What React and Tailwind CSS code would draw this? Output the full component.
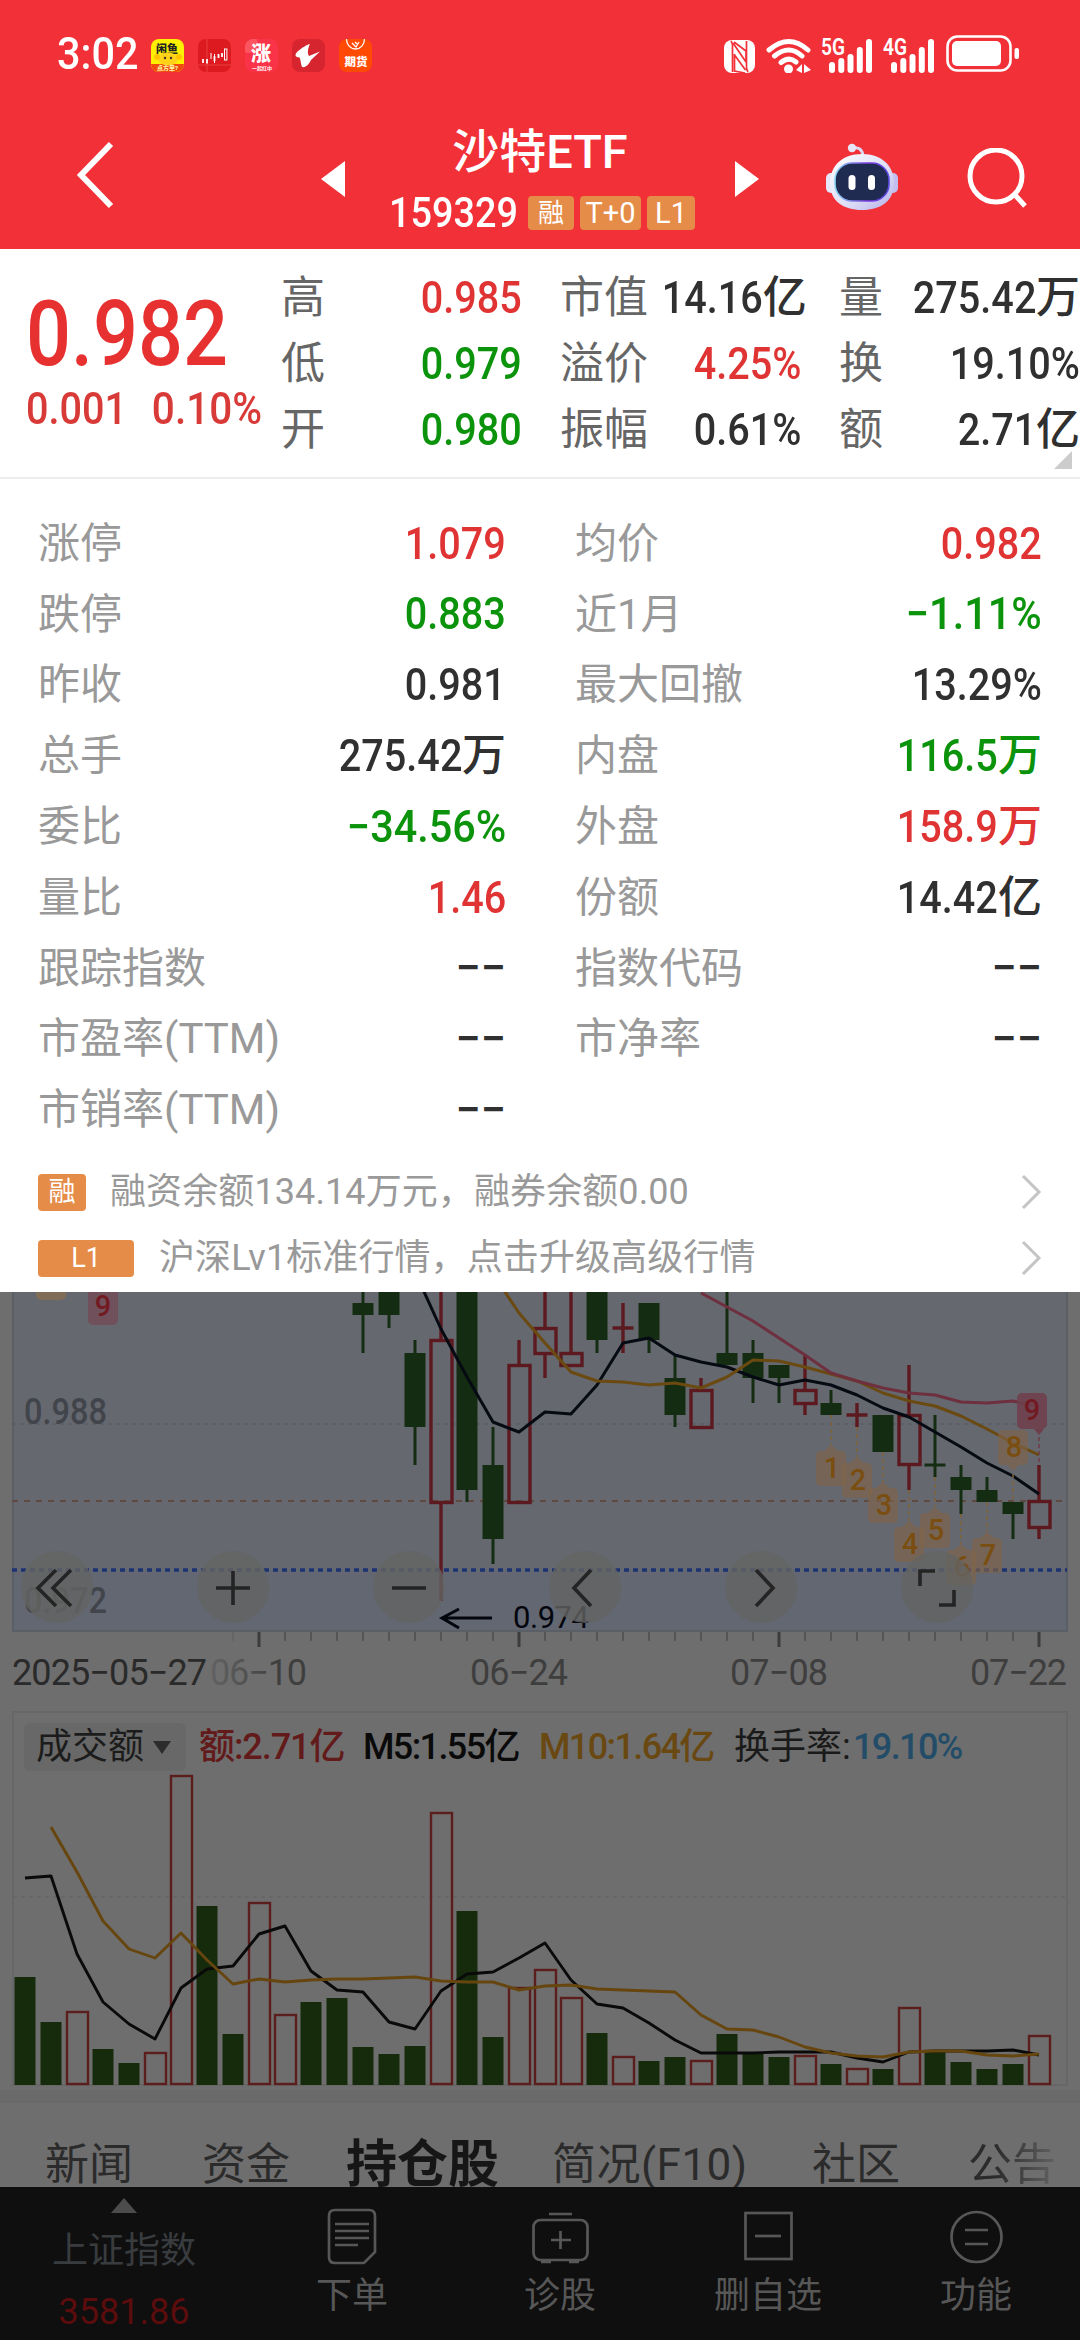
import React from "react";

const summary = [
  [["高", "0.985", "red"], ["低", "0.979", "green"], ["开", "0.980", "green"]],
  [["市值", "14.16亿"], ["溢价", "4.25%", "red"], ["振幅", "0.61%"]],
  [["量", "275.42万"], ["换", "19.10%"], ["额", "2.71亿"]],
];

const details = [
  ["涨停", "1.079", "red", "均价", "0.982", "red"],
  ["跌停", "0.883", "green", "近1月", "−1.11%", "green"],
  ["昨收", "0.981", "", "最大回撤", "13.29%", ""],
  ["总手", "275.42万", "", "内盘", "116.5万", "green"],
  ["委比", "−34.56%", "green", "外盘", "158.9万", "red"],
  ["量比", "1.46", "red", "份额", "14.42亿", ""],
  ["跟踪指数", "−−", "", "指数代码", "−−", ""],
  ["市盈率(TTM)", "−−", "", "市净率", "−−", ""],
  ["市销率(TTM)", "−−", "", "", "", ""],
];

const toneClass = (tone) => {
  if (tone === "red") return "text-[#df3433]";
  if (tone === "green") return "text-[#0b930b]";
  return "text-[#303030]";
};

// day index -> x of the candle centre
const px = (i) => 25 + i * 26;

// [index, up, high, low, bodyTop, bodyBottom]
const candles = [
  [13, 0, -10, 61, 11, 23],
  [14, 0, -10, 36, -10, 23],
  [15, 0, 48, 173, 61, 135],
  [16, 1, -10, 309, 48, 210],
  [17, 0, -10, 210, -10, 198],
  [18, 0, 135, 272, 173, 247],
  [19, 1, 48, 210, 73, 210],
  [20, 1, -10, 86, 36, 61],
  [21, 1, -10, 73, 61, 73],
  [22, 0, -10, 61, -10, 48],
  [23, 1, 11, 61, 36, 36],
  [24, 0, 11, 61, 11, 48],
  [25, 0, 64, 135, 86, 123],
  [26, 1, 86, 135, 98, 135],
  [27, 0, -10, 73, 61, 73],
  [28, 0, 48, 111, 61, 86],
  [29, 0, 73, 111, 73, 86],
  [30, 1, 62, 123, 98, 111],
  [31, 0, 98, 123, 111, 123],
  [32, 1, 111, 135, 123, 123],
  [33, 0, 123, 160, 123, 160],
  [34, 1, 73, 198, 123, 172],
  [35, 0, 123, 185, 173, 173],
  [36, 0, 173, 222, 185, 198],
  [37, 0, 185, 210, 198, 210],
  [38, 0, 210, 247, 210, 222],
  [39, 1, 173, 247, 209, 235],
];

const ma5 = [-20, 37, 85, 130, 140, 120, 122, 93, 51, 46, 63, 70, 75, 85, 93, 88, 93, 103, 116, 125, 140, 155, 171, 184, 202];
const ma10 = [-18, 21, 51, 80, 89, 90, 93, 91, 96, 85, 68, 69, 75, 82, 89, 101, 109, 114, 124, 137, 151, 163];
const ma20 = [1, 15, 29, 46, 63, 81, 89, 96, 101, 103, 110, 111, 109, 115];

// [number, index, boxTop, dotted line start]
const marks = [
  [1, 31, 159, 123],
  [2, 32, 171, 135],
  [3, 33, 196, 160],
  [4, 34, 235, 198],
  [5, 35, 221, 185],
  [6, 36, 258, 222],
  [7, 37, 246, 210],
];

// [height, up]
const volumes = [
  [108, 0], [63, 0], [73, 1], [36, 0], [22, 0], [32, 1], [309, 1], [179, 0], [51, 0], [182, 1],
  [70, 1], [83, 0], [87, 0], [38, 0], [31, 0], [39, 0], [272, 1], [174, 0], [48, 0], [97, 1],
  [115, 1], [87, 1], [52, 0], [28, 1], [24, 0], [28, 0], [24, 1], [51, 0], [31, 0], [28, 0],
  [29, 1], [21, 0], [16, 1], [16, 0], [77, 1], [33, 0], [23, 0], [16, 0], [21, 0], [49, 1],
];
const volMa5 = [207, 209, 131, 83, 61, 46, 97, 116, 119, 151, 159, 114, 95, 93, 63, 56, 94, 111, 113, 127, 142, 105, 81, 77, 62, 45, 32, 32, 32, 33, 33, 33, 27, 23, 33, 34, 34, 34, 35, 30];
const volMa10 = [258, 213, 164, 136, 127, 152, 125, 101, 106, 103, 105, 106, 106, 107, 108, 104, 103, 103, 95, 99, 100, 96, 95, 94, 93, 70, 56, 55, 48, 38, 32, 29, 28, 33, 34, 34, 30, 29, 31];

const toPoints = (ys, from) => ys.map((y, i) => `${px(from + i)},${y}`).join(" ");
const volPoints = (hs, from) => hs.map((h, i) => `${px(from + i)},${374 - h}`).join(" ");

// narrow digits, with the 万 / 亿 unit kept at its full width
const Value = ({ value, tone }) => {
  const [, digits, unit] = value.match(/^([^万亿]*)([万亿]?)$/);
  let scale = "scale-x-[0.88]";
  if (digits.startsWith("−")) scale = "scale-x-[0.92]";
  if (digits === "−−") scale = "";
  return (
    <span className={`text-[45px] font-medium whitespace-nowrap ${toneClass(tone)}`}>
      <span className={`inline-block origin-right ${scale}`}>{digits}</span>
      {unit && <span className="text-[44px]">{unit}</span>}
    </span>
  );
};

const AppBadge = ({ className, children }) => (
  <svg viewBox="0 0 33 33" className={`w-[33px] h-[33px] rounded-[8px] ${className}`}>
    {children}
  </svg>
);

const Signal = ({ label }) => (
  <svg viewBox="0 0 52 36" className="w-[52px] h-9 overflow-visible" fill="#fff">
    <text x="-1" y="18" fontSize="23" fontWeight="600" textLength="24" lengthAdjust="spacingAndGlyphs">
      {label}
    </text>
    <rect x="7" y="25" width="6" height="11" rx="3" />
    <rect x="16.3" y="21" width="6" height="15" rx="3" />
    <rect x="25.5" y="17" width="6" height="19" rx="3" />
    <rect x="34.8" y="10" width="6" height="26" rx="3" />
    <rect x="44" y="2" width="6" height="34" rx="3" />
  </svg>
);

const StatusBar = () => (
  <div className="h-[108px] pl-[57px] pt-[35px] pr-[60px] flex items-start justify-between text-white">
    <div className="flex items-center h-[40px]">
      <span className="w-[94px]">
        <span className="inline-block origin-left scale-x-[0.92] text-[45px] leading-[40px] font-medium">3:02</span>
      </span>
      <div className="flex gap-[14px]">
        <AppBadge className="bg-[#fdf000]">
          <rect y="25" width="33" height="8" fill="#f04a10" />
          <text x="5" y="14" fontSize="11" fontWeight="900" fill="#222">闲鱼</text>
          <ellipse cx="17" cy="20" rx="10" ry="6.5" fill="#ffd21a" />
          <circle cx="6" cy="18" r="3" fill="#ffc400" />
          <circle cx="28" cy="18" r="3" fill="#ffc400" />
          <circle cx="14" cy="19" r="1.2" fill="#432" />
          <circle cx="20" cy="19" r="1.2" fill="#432" />
          <text x="6" y="31" fontSize="6" fontWeight="900" fill="#fff3a0">点方单?</text>
        </AppBadge>
        <AppBadge className="bg-[#dc1a20]">
          <path d="M9 0V33M0 26H33" stroke="#ee4a4a" strokeWidth="0.8" />
          <path d="M5 20V24M9 20V24.500M16.500 17V22M20.500 15V19M24 14V18" stroke="#fff" strokeWidth="1.800" />
          <path d="M13 14V20M16.500 15V24" stroke="#fff" strokeWidth="1" />
          <rect x="26.500" y="10" width="2.400" height="11" fill="none" stroke="#fff" strokeWidth="1" />
        </AppBadge>
        <AppBadge className="bg-[#fb3348]">
          <circle cx="4" cy="5" r="9" fill="#ff6a72" opacity="0.6" />
          <text x="6" y="22" fontSize="20" fontWeight="900" fill="#fff">涨</text>
          <text x="7" y="31" fontSize="5" fontWeight="700" fill="#fff">一起红中</text>
        </AppBadge>
        <AppBadge className="bg-[#d6252f]">
          <path d="M15 6C8 10 4 13 3.500 16C3.500 18 5 18 7.500 18.500C9 21 8.500 25 10 28C14 29 17 25 19 21L28 12.500L17 17C15 14 16 9 18 5Z" fill="#fff" />
        </AppBadge>
        <AppBadge className="bg-[#ff4a05]">
          <path d="M7.500 0A9 10 0 0 0 25.500 0" fill="none" stroke="#fff" strokeWidth="1.300" />
          <path d="M13 4L17 8L20 3M16 3L18 5" fill="none" stroke="#fff" strokeWidth="1.300" />
          <text x="5.500" y="27" fontSize="11.500" fontWeight="900" fill="#fff">期货</text>
        </AppBadge>
      </div>
    </div>
    <div className="flex items-end">
      <svg viewBox="0 0 31 33" className="w-[31px] h-[33px] mt-1">
        <rect width="31" height="33" rx="8" fill="#fff" />
        <path d="M7 1Q8.500 3 8.500 6V32M9 3L22 22M10.500 14V31L21 33M24 32Q22.500 30 22.500 27V1M21.500 30L10.500 15M22 20V11L10 2" fill="none" stroke="#f13038" strokeWidth="1.700" />
      </svg>
      <svg viewBox="0 0 46 36" className="ml-[11px] w-[46px] h-9" fill="none" stroke="#fff" strokeWidth="5" strokeLinecap="round">
        <path d="M3 13Q23 -4 42 13M8.500 19Q23 7 36 19M15 25.500Q23 19 30 25" />
        <circle cx="22.500" cy="32" r="4.500" fill="#fff" stroke="none" />
        <path d="M36 27V36L30 33ZM38 27L45 33L38 36Z" fill="#fff" stroke="none" />
      </svg>
      <div className="ml-[10px] flex gap-[10px]">
        <Signal label="5G" />
        <Signal label="4G" />
      </div>
      <svg viewBox="0 0 74 38" className="ml-[10px] w-[74px] h-[38px]">
        <rect x="1.500" y="1.500" width="63" height="34" rx="10" fill="none" stroke="#fff" strokeWidth="2.600" />
        <rect x="6" y="6" width="49" height="25" rx="5" fill="#fff" />
        <rect x="68.500" y="13" width="4.500" height="11" rx="2" fill="#fff" />
      </svg>
    </div>
  </div>
);

const Robot = () => (
  <svg viewBox="0 0 73 68" className="ml-[66px] mb-1 w-[73px] h-[68px]">
    <defs>
      <linearGradient id="shell" x1="0" y1="0" x2="1" y2="1">
        <stop offset="0" stopColor="#fff" />
        <stop offset="0.6" stopColor="#dcdcf6" />
        <stop offset="1" stopColor="#b4b0ea" />
      </linearGradient>
      <linearGradient id="rim" x1="0" y1="0" x2="1" y2="0">
        <stop offset="0" stopColor="#8ad6f4" />
        <stop offset="0.6" stopColor="#7a3ce0" />
        <stop offset="1" stopColor="#5a4be0" />
      </linearGradient>
    </defs>
    <path d="M27 5Q37 3 38 13" fill="none" stroke="#dcd8f2" strokeWidth="3" />
    <circle cx="27" cy="5" r="4.200" fill="#e6e4f6" />
    <rect x="1" y="30" width="10" height="20" rx="5" fill="#e6e6fa" />
    <rect x="63" y="30" width="10" height="20" rx="5" fill="#c2bff0" />
    <path d="M37 11C58 11 69 24 69 40C69 58 56 67 37 67C18 67 5 58 5 40C5 24 16 11 37 11Z" fill="url(#shell)" />
    <rect x="10" y="20" width="54" height="38" rx="17" fill="#1f2b50" stroke="url(#rim)" strokeWidth="1.600" />
    <rect x="23.500" y="32" width="7" height="15" rx="3.500" fill="#fff" />
    <rect x="43" y="32" width="7" height="15" rx="3.500" fill="#fff" />
  </svg>
);

const TitleBar = () => (
  <div className="h-[141px] flex items-center text-white">
    <div className="w-[321px] pl-[76px]">
      <svg viewBox="0 0 38 68" className="w-[38px] h-[68px] -mt-2" fill="none" stroke="#fff" strokeWidth="6">
        <path d="M35 3L5 34L35 65" />
      </svg>
    </div>
    <svg viewBox="0 0 24 36" className="w-6 h-9" fill="#fff">
      <path d="M24 0V36L0 18Z" />
    </svg>
    <div className="w-[390px] pt-[4px] flex flex-col items-center">
      <div className="text-[47px] leading-[56px] font-medium">沙特ETF</div>
      <div className="mt-[8px] pl-[4px] flex items-center gap-[6px]">
        <span className="w-[133px]">
          <span className="inline-block origin-left scale-x-[0.9] text-[42px] leading-[50px] font-medium">159329</span>
        </span>
        <span className="w-[46px] h-[34px] rounded-[4px] bg-[#e58c49] text-[26px] leading-[34px] text-center">融</span>
        <span className="w-[61px] h-[34px] rounded-[4px] bg-[#e58c49] text-[29px] leading-[34px] text-center">T+0</span>
        <span className="w-[48px] h-[34px] rounded-[4px] bg-[#e58c49] text-[29px] leading-[34px] text-center">L1</span>
      </div>
    </div>
    <svg viewBox="0 0 24 36" className="w-6 h-9" fill="#fff">
      <path d="M0 0V36L24 18Z" />
    </svg>
    <Robot />
    <svg viewBox="0 0 62 62" className="ml-[69px] w-[62px] h-[62px]" fill="none" stroke="#fff" strokeWidth="5">
      <circle cx="29" cy="28" r="26" />
      <path d="M48 47L58 58" />
    </svg>
  </div>
);

const QuoteSummary = () => (
  <div className="relative h-[230px] border-b-2 border-[#ececec] flex">
    <div className="w-[281px] shrink-0 pl-[26px] pt-[39px] text-[#e63130]">
      <div className="h-[94px]">
        <span className="inline-block origin-left scale-x-[0.87] text-[91px] leading-[92px] font-medium">0.982</span>
      </div>
      <div className="mt-[4px] w-[236px] flex justify-between text-[45px] leading-[46px] font-medium text-[#d83a38]">
        <span className="w-[112px] origin-left scale-x-[0.88]">0.001</span>
        <span className="w-[124px] flex justify-end origin-right scale-x-[0.9]">0.10%</span>
      </div>
    </div>
    <div className="pt-[16px] flex shrink-0 gap-[38px]">
      {summary.map((col, i) => (
        <div key={i} className="w-[241px]">
          {col.map(([label, value, tone]) => (
            <div key={label} className="h-[66px] flex items-center justify-between whitespace-nowrap">
              <span className="text-[44px] text-[#666]">{label}</span>
              <Value value={value} tone={tone} />
            </div>
          ))}
        </div>
      ))}
    </div>
    <svg viewBox="0 0 18 18" className="absolute right-2 bottom-2 w-[18px] h-[18px]" fill="#ccc">
      <path d="M18 0V18H0Z" />
    </svg>
  </div>
);

const DetailSheet = () => (
  <div className="h-[813px] pt-[29px] pl-[38px] pr-[38px]">
    {details.map((row) => (
      <div key={row[0]} className="h-[70.8px] grid grid-cols-[468px_467px] gap-x-[69px] items-center">
        <div className="flex items-center justify-between">
          <span className="text-[42px] text-[#999]">{row[0]}</span>
          <Value value={row[1]} tone={row[2]} />
        </div>
        <div className="flex items-center justify-between">
          <span className="text-[42px] text-[#999]">{row[3]}</span>
          <Value value={row[4]} tone={row[5]} />
        </div>
      </div>
    ))}
    <div className="mt-[14px]">
      <Notice tag="融" tagClass="w-[48px]" gap="ml-[24px]" text="融资余额134.14万元，融券余额0.00" />
      <Notice tag="L1" tagClass="w-[96px]" gap="ml-[25px]" text="沪深Lv1标准行情，点击升级高级行情" />
    </div>
  </div>
);

const Notice = ({ tag, tagClass, gap, text }) => (
  <div className="h-[66px] flex items-center">
    <span className={`h-[37px] rounded-[4px] bg-[#e58c49] text-white text-[27px] leading-[37px] text-center ${tagClass}`}>{tag}</span>
    <span className={`text-[36px] tracking-[0.1px] text-[#999] ${gap}`}>{text}</span>
    <svg viewBox="0 0 22 36" className="ml-auto w-[22px] h-9" fill="none" stroke="#c4c4c4" strokeWidth="3">
      <path d="M3 2L19 18L3 34" />
    </svg>
  </div>
);

const Mark = ({ n, x, top, down }) => (
  <g>
    <path
      d={
        down
          ? `M${x - 10} ${top}h20q5 0 5 5v25q0 5 -5 5h-4l-6 6l-6 -6h-4q-5 0 -5 -5v-25q0 -5 5 -5z`
          : `M${x - 10} ${top}h3l7 -6l7 6h3q5 0 5 5v25q0 5 -5 5h-20q-5 0 -5 -5v-25q0 -5 5 -5z`
      }
      fill="#806448"
      fillOpacity="0.65"
    />
    <text x={x + 1} y={top + 27} textAnchor="middle" fontSize="29" fontWeight="500" fill="#7a4e10">
      {n}
    </text>
  </g>
);

const KLineChart = () => (
  <svg viewBox="0 0 1080 419" className="block w-[1080px] h-[419px]">
    <rect x="12" y="0" width="1056" height="339" fill="#65686f" />
    <rect x="12" y="278" width="1056" height="61" fill="#626772" />
    <path d="M13 0V339H1067V0" fill="none" stroke="#5a5f66" strokeWidth="2" />
    <path d="M12 132H1067" stroke="#575a60" strokeWidth="1" strokeDasharray="4 4" />
    <path d="M12 209H1067" stroke="#5e4a40" strokeWidth="2" strokeDasharray="6 6" />
    <path d="M12 278H1067" stroke="#1c3272" strokeWidth="3.500" strokeDasharray="5 4" />
    <g fontSize="37" fontWeight="500" fill="#41454b">
      <text x="24" y="132" textLength="83" lengthAdjust="spacingAndGlyphs">0.988</text>
      <text x="24" y="321" textLength="83" lengthAdjust="spacingAndGlyphs">0.972</text>
    </g>

    <rect x="36" y="-15" width="30" height="23" rx="5" fill="#7f6d58" />
    <rect x="88" y="-3" width="30" height="36" rx="5" fill="#70505a" />
    <text x="103" y="24" textAnchor="middle" fontSize="29" fontWeight="500" fill="#721a22">9</text>

    {candles.map(([i, up, high, low, top, bottom]) => {
      const x = px(i);
      const color = up ? "#5c1a20" : "#142c12";
      const w = up ? 3.4 : 3;
      if (top === bottom) {
        return <path key={i} d={`M${x} ${high}V${low}M${x - 10.5} ${top}h21`} stroke={color} strokeWidth={w} />;
      }
      return (
        <g key={i}>
          <path d={`M${x} ${high}V${top}M${x} ${bottom}V${low}`} stroke={color} strokeWidth={w} />
          {up ? (
            <rect x={x - 10} y={top + 0.5} width="21" height={bottom - top} fill="none" stroke={color} strokeWidth="3.4" />
          ) : (
            <rect x={x - 10.5} y={top} width="21" height={bottom - top} fill={color} />
          )}
        </g>
      );
    })}

    <g fill="none" strokeWidth="3" strokeLinejoin="round">
      <polyline points={toPoints(ma5, 15)} stroke="#060a12" />
      <polyline points={toPoints(ma10, 18)} stroke="#6a4a10" />
      <polyline points={toPoints(ma20, 26)} stroke="#6e303f" />
    </g>

    {marks.map(([n, i, top, from]) => (
      <g key={n}>
        <path d={`M${px(i)} ${from}V${top - 6}`} stroke="#80623a" strokeWidth="1.5" strokeDasharray="4 3" />
        <Mark n={n} x={px(i)} top={top} />
      </g>
    ))}
    <path d={`M${px(38)} 182V210`} stroke="#80623a" strokeWidth="1.5" strokeDasharray="4 3" />
    <path d={`M${px(39)} 145V173`} stroke="#6e3a45" strokeWidth="1.5" strokeDasharray="4 3" />
    <Mark n={8} x={px(38)} top={138} down />
    <g>
      <rect x="1017" y="101" width="30" height="36" rx="5" fill="#6e404c" fillOpacity="0.9" />
      <path d="M1034 137h10l-5 6z" fill="#6e404c" />
      <text x="1032" y="128" textAnchor="middle" fontSize="29" fontWeight="500" fill="#721a22">9</text>
    </g>

    <path d="M492 326H442M459 317L442 326L459 336" fill="none" stroke="#04060e" strokeWidth="3" />
    <text x="513" y="336" fontSize="31" fill="#04060e" textLength="76">0.974</text>

    {Array.from({ length: 32 }, (_, k) => k + 8).map((i) => (
      <path
        key={i}
        d={`M${px(i)} 340V${i % 10 === 9 ? 355 : 349}`}
        stroke={i === 8 ? "#5c5c5c" : "#3c3c3c"}
        strokeWidth={i % 10 === 9 ? 3 : 1}
      />
    ))}

    <defs>
      <linearGradient id="dateFade" x1="0" y1="0" x2="1" y2="0">
        <stop offset="0" stopColor="#626262" />
        <stop offset="0.4" stopColor="#505050" />
        <stop offset="0.7" stopColor="#3e3e3e" />
      </linearGradient>
    </defs>
    <g fontSize="36" fill="#3e3e3e">
      <text x="12" y="393" fill="#2a2a2a" textLength="195">2025−05−27</text>
      <text x="210" y="393" fill="url(#dateFade)" textLength="97">06−10</text>
      <text x="470" y="393" textLength="98">06−24</text>
      <text x="730" y="393" textLength="98">07−08</text>
      <text x="970" y="393" textLength="97">07−22</text>
    </g>
  </svg>
);

const chartButtons = [
  "M35 19L17 37L35 55M50 19L32 37L50 55",
  "M36 20V54M19 37H53",
  "M19 37H53",
  "M42 19L25 37L42 55",
  "M31 19L48 37L31 55",
  "M19 35V20H34M38 54H53V39",
];

const ChartControls = () => (
  <div className="absolute left-[21px] top-[259px] flex gap-[104px]">
    {chartButtons.map((d) => (
      <button key={d} className="w-[72px] h-[72px] rounded-full bg-[#646463]/80">
        <svg viewBox="0 0 72 72" className="w-[72px] h-[72px]" fill="none" stroke="#242424" strokeWidth="3.6">
          <path d={d} />
        </svg>
      </button>
    ))}
  </div>
);

const VolumePanel = () => (
  <div className="mx-3 h-[375px] border-2 border-[#676767] relative">
    <div className="absolute left-[10px] top-[10px] h-[48px] flex items-center text-[36px] font-medium whitespace-nowrap">
      <div className="w-[162px] h-[48px] rounded-[6px] bg-[#686868] flex items-center pl-[12px] text-[#1c1c1c]">
        <span className="font-normal">成交额</span>
        <svg viewBox="0 0 18 13" className="ml-[9px] w-[18px] h-[13px]" fill="#2c2c2c">
          <path d="M0 0H18L9 13Z" />
        </svg>
      </div>
      <span className="ml-[13px] w-[164px] text-[#631a1b] tracking-[-0.03em]">额:2.71亿</span>
      <span className="w-[176px] text-[#0a0a0a] tracking-[-0.045em]">M5:1.55亿</span>
      <span className="w-[195px] text-[#694812] tracking-[-0.045em]">M10:1.64亿</span>
      <span className="w-[119px] font-normal text-[#1a1a1a]">换手率:</span>
      <span className="text-[#234c68] tracking-[-0.045em]">19.10%</span>
    </div>
    <svg viewBox="12 0 1056 375" className="-m-[2px] block w-[1056px] h-[375px] max-w-none">
      <path d="M13 186H1067" stroke="#606060" strokeWidth="1" strokeDasharray="4 4" />
      {volumes.map(([h, up], i) =>
        up ? (
          <rect key={i} x={px(i) - 10} y={374 - h} width="21" height={h - 1} fill="none" stroke="#5c1d1d" strokeWidth="2.4" />
        ) : (
          <rect key={i} x={px(i) - 10.5} y={374 - h} width="21" height={h} fill="#152b0c" />
        )
      )}
      <g fill="none" strokeWidth="2.9" strokeLinejoin="round">
        <polyline points={volPoints(volMa5, 0)} stroke="#0a0a0a" />
        <polyline points={volPoints(volMa10, 1)} stroke="#66460e" />
      </g>
    </svg>
  </div>
);

const NewsTabs = () => (
  <div className="h-[84px] overflow-hidden flex text-[44px] leading-[60px] pt-[32px] pl-[45px] text-[#2b2b2b] whitespace-nowrap">
    <span className="w-[157px]">新闻</span>
    <span className="w-[144px]">资金</span>
    <span className="w-[206px] text-[51px] font-bold text-[#161616]">持仓股</span>
    <span className="w-[260px] tracking-[0.5px]">简况(F10)</span>
    <span className="w-[156px]">社区</span>
    <span className="bg-gradient-to-r from-[#2b2b2b] from-30% to-[#626262] bg-clip-text text-transparent">公告</span>
  </div>
);

const BottomBar = () => (
  <div className="h-[153px] bg-[#0f0f0f] flex text-[36px] leading-[44px] text-[#575757]">
    <div className="w-[248px] flex flex-col items-center pt-[11px]">
      <svg viewBox="0 0 26 15" className="w-[26px] h-[15px]" fill="#4c4c4c">
        <path d="M0 15L13 0L26 15Z" />
      </svg>
      <span className="mt-[16px] text-[#393c3f]">上证指数</span>
      <span className="mt-[17px] text-[#5c0c0c]">3581.86</span>
    </div>
    <BarItem label="下单">
      <path d="M10 3H44Q50 3 50 9V45L39 56H10Q4 56 4 50V9Q4 3 10 3Z" />
      <path d="M10 17H44M10 24H44M10 31H44M10 38H33" />
    </BarItem>
    <BarItem label="诊股">
      <rect x="0.5" y="13" width="54" height="40" rx="7" />
      <path d="M16 7H39M27.500 24V42M18 33H38M8 55H18M36 55H46" />
    </BarItem>
    <BarItem label="删自选">
      <rect x="4.5" y="6" width="46" height="46" />
      <path d="M14 29H40" />
    </BarItem>
    <BarItem label="功能">
      <circle cx="27.5" cy="30" r="25" />
      <path d="M16 23H39M16 37H39" />
    </BarItem>
  </div>
);

const BarItem = ({ label, children }) => (
  <div className="w-[208px] flex flex-col items-center pt-[20px]">
    <svg viewBox="-1 0 57 60" className="w-[57px] h-[60px]" fill="none" stroke="#575757" strokeWidth="2.7">
      {children}
    </svg>
    <span className="mt-[7px]">{label}</span>
  </div>
);

const App = () => {
  return (
    <div className="w-[1080px] h-[2340px] overflow-hidden bg-white font-[Roboto,'Noto_Sans_CJK_SC',sans-serif]">
      <div className="bg-[#f13038] h-[249px]">
        <StatusBar />
        <TitleBar />
      </div>
      <QuoteSummary />
      <DetailSheet />
      <div className="bg-[#6e6e6e]">
        <div className="relative">
          <KLineChart />
          <ChartControls />
        </div>
        <VolumePanel />
        <div className="mt-[4px] h-[13px] bg-[#6a6a6a]" />
        <NewsTabs />
      </div>
      <BottomBar />
    </div>
  );
};

export default App;
